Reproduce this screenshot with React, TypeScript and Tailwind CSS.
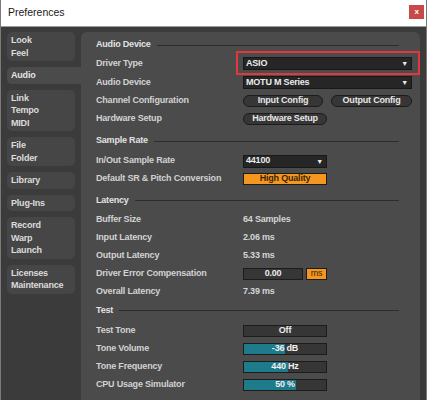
import type { ReactNode } from 'react';

// Shared font stack for the small bold UI text
const ui = "font-['Liberation_Sans',Arial,sans-serif] font-bold text-[9px] tracking-[-0.2px]";

function NavBox({ lines, active }: { lines: string[]; active?: boolean }) {
  return (
    <div
      className={
        active
          ? 'w-[74px] rounded-l-[5px] bg-[#4b4b4b] py-[2px] pl-[4px] leading-[12.5px] text-[#e4e4e4]'
          : 'w-[68px] rounded-[5px] bg-[#464646] py-[2px] pl-[4px] leading-[12.5px] text-[#dcdcdc]'
      }
    >
      {lines.map((l) => (
        <div key={l}>{l}</div>
      ))}
    </div>
  );
}

function Header({ title, h }: { title: string; h: string }) {
  return (
    <div className={`flex items-center gap-[6px] pr-[13px] text-[#e2e2e2] ${h}`}>
      <span>{title}</span>
      <div className="h-px flex-1 bg-[#2c2c2c]" />
    </div>
  );
}

function Row({ label, h, children }: { label: string; h: string; children?: ReactNode }) {
  return (
    <div className={`flex items-center ${h}`}>
      <div className="w-[147px] shrink-0 text-[#d2d2d2]">{label}</div>
      <div className="flex flex-1 items-center gap-[8px]">{children}</div>
    </div>
  );
}

function Dropdown({ value, w }: { value: string; w: string }) {
  return (
    <div className={`flex h-[13px] items-center justify-between border border-[#181818] bg-[#262626] pl-[2px] pr-[3px] text-[#ececec] ${w}`}>
      <span>{value}</span>
      <span className="text-[7px] leading-none">▼</span>
    </div>
  );
}

function Pill({ label, w }: { label: string; w: string }) {
  return (
    <div className={`flex h-[12px] items-center justify-center rounded-full border border-[#1c1c1c] bg-[#363636] text-[#e6e6e6] ${w}`}>
      {label}
    </div>
  );
}

function Slider({ label, fill }: { label: string; fill: number }) {
  return (
    <div className="relative h-[12px] w-[84px] border border-[#1c1c1c] bg-[#363636]">
      <div className="absolute inset-y-0 left-0 bg-[#1f7a8a]" style={{ width: `${fill}px` }} />
      <div className="relative flex h-full items-center justify-center text-[#f0f0f0]">{label}</div>
    </div>
  );
}

export default function App() {
  return (
    <div className={`flex h-[400px] w-[427px] flex-col overflow-hidden border-x border-[#7a7a7a] bg-[#3b3b3b] ${ui}`}>
      {/* Title bar */}
      <div className="flex h-[27px] shrink-0 items-center justify-between border-b border-[#9c9c9c] bg-white pl-[7px] pr-[2px]">
        <span className="font-['Liberation_Sans',Arial,sans-serif] text-[10.5px] font-normal tracking-normal text-[#1a1a1a]">
          Preferences
        </span>
        <div className="mb-[2px] flex h-[14px] w-[15px] items-center justify-center bg-[#c94848] text-[8px] text-white">
          x
        </div>
      </div>

      <div className="flex flex-1">
        {/* Sidebar */}
        <div className="flex w-[80px] shrink-0 flex-col gap-[6px] pl-[6px] pt-[5px]">
          <NavBox lines={['Look', 'Feel']} />
          <NavBox lines={['Audio']} active />
          <NavBox lines={['Link', 'Tempo', 'MIDI']} />
          <NavBox lines={['File', 'Folder']} />
          <NavBox lines={['Library']} />
          <NavBox lines={['Plug-Ins']} />
          <NavBox lines={['Record', 'Warp', 'Launch']} />
          <NavBox lines={['Licenses', 'Maintenance']} />
        </div>

        {/* Main panel */}
        <div className="mr-[6px] mt-[5px] flex-1 rounded-t-[6px] bg-[#4b4b4b] pl-[15px] pr-[8px] pt-[4px]">
          <Header title="Audio Device" h="h-[18px]" />
          <Row label="Driver Type" h="h-[19px]">
            <div className="relative">
              <Dropdown value="ASIO" w="w-[169px]" />
              <div className="absolute -bottom-[5px] -left-[7px] -right-[8px] -top-[6px] border-2 border-[#e0383c]" />
            </div>
          </Row>
          <Row label="Audio Device" h="h-[19px]">
            <Dropdown value="MOTU M Series" w="w-[169px]" />
          </Row>
          <Row label="Channel Configuration" h="h-[18px]">
            <Pill label="Input Config" w="w-[80px]" />
            <Pill label="Output Config" w="w-[81px]" />
          </Row>
          <Row label="Hardware Setup" h="h-[18px]">
            <Pill label="Hardware Setup" w="w-[84px]" />
          </Row>

          <Header title="Sample Rate" h="h-[24px] pt-[2px]" />
          <Row label="In/Out Sample Rate" h="h-[18px]">
            <Dropdown value="44100" w="w-[84px]" />
          </Row>
          <Row label="Default SR & Pitch Conversion" h="h-[18px]">
            <div className="flex h-[12px] w-[84px] items-center justify-center border border-[#1c1c1c] bg-[#f5961f] text-[#3a2608]">
              High Quality
            </div>
          </Row>

          <Header title="Latency" h="h-[23px] pt-[2px]" />
          <Row label="Buffer Size" h="h-[18px]">
            <span className="text-[#d4d4d4]">64 Samples</span>
          </Row>
          <Row label="Input Latency" h="h-[18px]">
            <span className="text-[#d4d4d4]">2.06 ms</span>
          </Row>
          <Row label="Output Latency" h="h-[18px]">
            <span className="text-[#d4d4d4]">5.33 ms</span>
          </Row>
          <Row label="Driver Error Compensation" h="h-[18px]">
            <div className="flex gap-[3px]">
              <div className="flex h-[12px] w-[60px] items-center justify-center border border-[#1c1c1c] bg-[#363636] text-[#ececec]">
                0.00
              </div>
              <div className="flex h-[12px] w-[21px] items-center justify-center border border-[#1c1c1c] bg-[#f5961f] font-normal text-[#3a2608]">
                ms
              </div>
            </div>
          </Row>
          <Row label="Overall Latency" h="h-[18px]">
            <span className="text-[#d4d4d4]">7.39 ms</span>
          </Row>

          <Header title="Test" h="h-[19px]" />
          <Row label="Test Tone" h="h-[20px] pt-[2px]">
            <div className="flex h-[12px] w-[84px] items-center justify-center border border-[#1c1c1c] bg-[#363636] text-[#ececec]">
              Off
            </div>
          </Row>
          <Row label="Tone Volume" h="h-[18px]">
            <Slider label="-36 dB" fill={41} />
          </Row>
          <Row label="Tone Frequency" h="h-[18px]">
            <Slider label="440 Hz" fill={44} />
          </Row>
          <Row label="CPU Usage Simulator" h="h-[18px]">
            <Slider label="50 %" fill={52} />
          </Row>
        </div>
      </div>
    </div>
  );
}
